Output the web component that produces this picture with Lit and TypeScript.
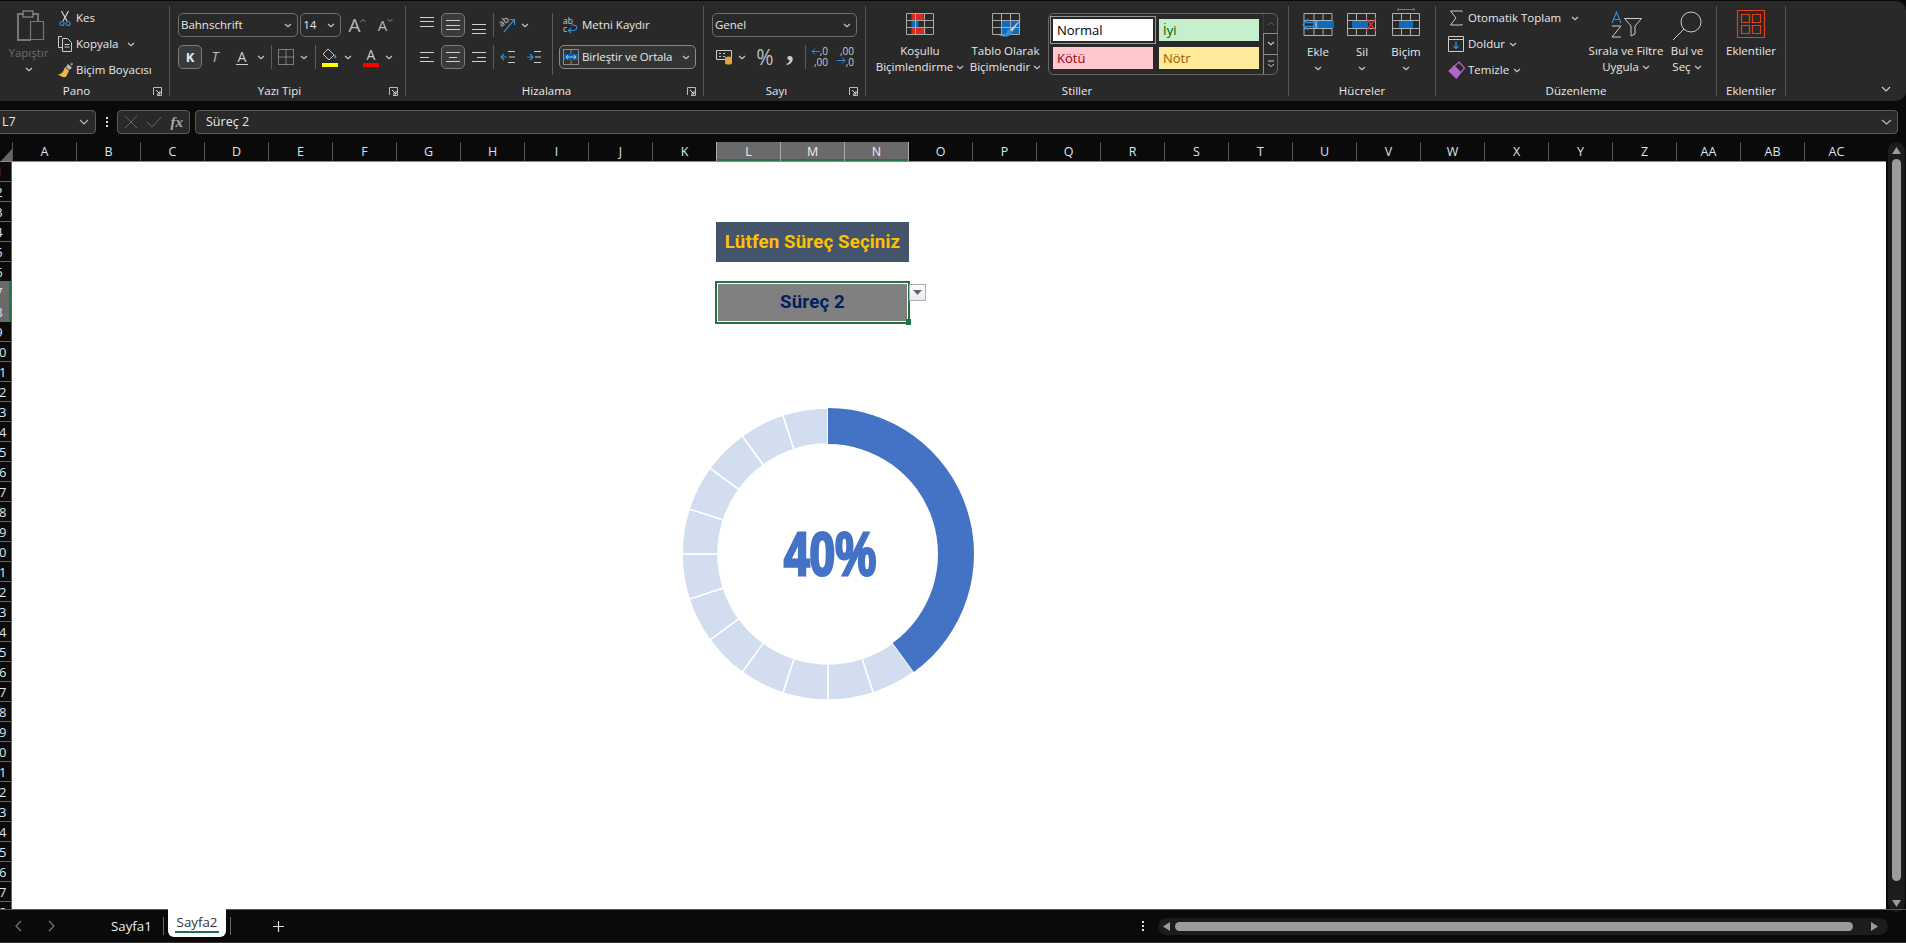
import { LitElement, html, svg, css } from "lit";
import { customElement } from "lit/decorators.js";
import { classMap } from "lit/directives/class-map.js";

const INK = "#c9c9c9";
const BLUE = "#2f8fd8";

const chev = html`<svg class="chev" width="8" height="5" viewBox="0 0 8 5"><path d="M1 1l3 2.600L7 1" fill="none" stroke="${INK}" stroke-width="1.200"/></svg>`;
const launcher = html`<svg width="9" height="9" viewBox="0 0 9 9" fill="none" stroke="#bbb"><path d="M.5 8V.5H8.500V8.500H4"/><path d="M3 3l4 4M4 7h3V4" stroke="#ddd"/></svg>`;

const ico = {
  paste: html`<svg width="28" height="32" viewBox="0 0 28 32" fill="none" stroke="#777" stroke-width="2"><path d="M7 4H1v26h13"/><path d="M15 4h6v7"/><path d="M6 1h10v6H6z" stroke-width="1.400"/><path d="M13.500 11.500h13v18h-13z" stroke-width="1.200"/></svg>`,
  cut: html`<svg width="12" height="17" viewBox="0 0 12 17" fill="none"><path d="M2.500 1l5.500 10M9.500 1L4 11" stroke="#ddd" stroke-width="1.100"/><circle cx="3" cy="13.500" r="2" stroke="${BLUE}" stroke-width="1.200"/><circle cx="9" cy="13.500" r="2" stroke="${BLUE}" stroke-width="1.200"/></svg>`,
  copy: html`<svg width="16" height="16" viewBox="0 0 16 16" fill="none" stroke="#ccc"><path d="M5 .5H1.500v11H5"/><path d="M5.500 2.500h5l4 4v9h-9z"/><path d="M7.500 8.500h5M7.500 11h5"/></svg>`,
  painter: html`<svg width="17" height="16" viewBox="0 0 17 16"><path d="M8 5l4 4-3 6c-3 .5-6-.5-8-3 3 .5 5-1 7-7z" fill="#e8b64c"/><path d="M9 5l2-3 4 4-3 2z" fill="#bbb"/><path d="M13 2l2-1.500 1.200 1.500-1.700 2z" fill="#888"/></svg>`,
  lines: (a: number, b: number, c: number, x1 = [2, 2, 2], x2 = [16, 16, 16]) => html`<svg width="18" height="24" viewBox="0 0 18 24" stroke="#d0d0d0"><path d="M${x1[0]} ${a}.5H${x2[0]}M${x1[1]} ${b}.5H${x2[1]}M${x1[2]} ${c}.5H${x2[2]}" fill="none"/></svg>`,
  orient: html`<svg width="18" height="18" viewBox="0 0 18 18" fill="none"><text x="1" y="9" transform="rotate(-40 5 8)" font-size="9" font-family="Open Sans" fill="#ccc">ab</text><path d="M5 16L15 4M10.500 3.500h5V9" stroke="${BLUE}" stroke-width="1.200"/></svg>`,
  outdent: html`<svg width="16" height="14" viewBox="0 0 16 14" fill="none"><path d="M8 1.500h7M8 12.500h7M9 7h6" stroke="#ccc"/><path d="M7 7H1M4 4L1 7l3 3" stroke="${BLUE}" stroke-width="1.200"/></svg>`,
  indent: html`<svg width="16" height="14" viewBox="0 0 16 14" fill="none"><path d="M8 1.500h7M8 12.500h7M9 7h6" stroke="#ccc"/><path d="M1 7h6M4 4l3 3-3 3" stroke="${BLUE}" stroke-width="1.200"/></svg>`,
  wrap: html`<svg width="16" height="16" viewBox="0 0 16 16" fill="none"><text x="1" y="7" font-size="8.500" font-family="Open Sans" fill="#ccc">ab</text><text x="1" y="15" font-size="8.500" font-family="Open Sans" fill="#ccc">c</text><path d="M7 13.500h4c5 0 5-5.500 0-5.500H9M9 11l-2.500 2.500L9 16" stroke="${BLUE}" stroke-width="1.100"/></svg>`,
  merge: html`<svg width="16" height="16" viewBox="0 0 16 16" fill="none"><rect x=".5" y=".5" width="15" height="15" stroke="#8a8a8a"/><rect x="1" y="5" width="14" height="6" fill="#0f5ea8"/><path d="M3 8h10M5 6l-2 2 2 2M11 6l2 2-2 2" stroke="#8fd0ff"/><path d="M8 .5v4M8 11.500v4" stroke="#8a8a8a"/></svg>`,
  acc: html`<svg width="17" height="16" viewBox="0 0 17 16" fill="none"><path d="M.5 1.500h15v9h-15z" stroke="#ccc"/><path d="M3 4.500h2M3 7.500h2M7 4.500h2M7 7.500h2" stroke="#ccc"/><ellipse cx="12.500" cy="9" rx="3.500" ry="1.500" fill="#e8a33d"/><path d="M9 9v5c0 2 7 2 7 0V9" fill="#e8a33d"/></svg>`,
  cond: html`<svg width="28" height="22" viewBox="0 0 28 22" fill="none"><path d="M5.500 .5h12v7h-12z" fill="#d92b20"/><path d="M5.500 7.500h7v7h-7z" fill="#0f6cbd"/><path d="M5.500 14.500h14v7h-14z" fill="#d92b20"/><path d="M.5.5h27v21H.5zM.5 7.500h27M.5 14.500h27M9.500.5v21M18.500.5v21" stroke="#a8a8a8"/></svg>`,
  table: html`<svg style="margin-left:2px" width="30" height="25" viewBox="0 0 30 25" fill="none"><path d="M9.500 7.500h18v14h-18z" fill="#0f6cbd"/><path d="M.5.5h27v21H.5zM.5 7.500h27M.5 14.500h27M9.500.5v21M18.500.5v21" stroke="#a8a8a8"/><path d="M29 6L18 17l2 2z" fill="#ccc"/><path d="M17 16c-2 1-2 4-4 5-2 1-5 1-6 1 3 2 9 3 12-1 1-2 1-3 1-3z" fill="#3a8fd0"/></svg>`,
  ekle: html`<svg width="32" height="23" viewBox="0 0 32 23" fill="none"><path d="M2 .5h28v22H2zM2 7.500h28M2 15.500h28M12 .5v22M21 .5v22" stroke="#b0b0b0"/><path d="M12 8h20v7H12z" fill="#0f6cbd"/><path d="M14 8v7" stroke="#fff"/><path d="M16 9.500H4M16 13.500H4M6 6l-5 5.500 5 5.500" stroke="${BLUE}" stroke-width="1.400"/></svg>`,
  sil: html`<svg width="30" height="23" viewBox="0 0 30 23" fill="none"><path d="M.5.5h28v22H.5zM.5 7.500h28M.5 15.500h28M9.500.5v22M19.500.5v22" stroke="#b0b0b0"/><path d="M5 8h16v7H5z" fill="#0f6cbd"/><path d="M19 5l10 13M29 5L19 18" stroke="#d13438" stroke-width="1.400"/></svg>`,
  bicim: html`<svg width="28" height="28" viewBox="0 0 28 28" fill="none"><path d="M6 1.500h16M6 0v3M22 0v3" stroke="${BLUE}"/><path d="M.5 5.500h27v22H.5zM.5 12.500h27M.5 20.500h27M9.500 5.500v22M18.500 5.500v22" stroke="#b0b0b0"/><path d="M7 13h14v7H7z" fill="#0f6cbd"/></svg>`,
  sigma: html`<svg width="14" height="16" viewBox="0 0 14 16" fill="none"><path d="M13 2V1H1.500L7 8l-5.500 7H13v-1" stroke="#ccc"/></svg>`,
  fill: html`<svg width="16" height="16" viewBox="0 0 16 16" fill="none"><path d="M.5.5h15v15H.5zM.5 3.500h15" stroke="#ccc"/><path d="M8 5.500v7M5.500 10L8 12.500 10.500 10" stroke="${BLUE}" stroke-width="1.200"/></svg>`,
  clear: html`<svg width="17" height="18" viewBox="0 0 17 18"><path d="M11 1l5.500 6-8 10L1 10z" fill="none" stroke="#b565c9" stroke-width="1.200"/><path d="M1 10l5-6 7 7-4.500 6z" fill="#b565c9"/></svg>`,
  sort: html`<svg width="31" height="27" viewBox="0 0 31 27" fill="none"><path d="M13.500 7.500h17L24 15v8l-4 2v-10z" stroke="#ccc"/><path d="M1 15h9L1 26h9" stroke="#ccc"/><path d="M1 12L5.500 1 10 12M2.500 8.500h6" stroke="${BLUE}" stroke-width="1.200"/></svg>`,
  find: html`<svg width="30" height="30" viewBox="0 0 30 30" fill="none" stroke="#ccc"><circle cx="19" cy="11" r="10"/><path d="M12 18L1 29"/></svg>`,
  addin: html`<svg width="28" height="28" viewBox="0 0 28 28" fill="none" stroke="#e0401a" stroke-width="1.200"><path d="M.5.5h27v27H.5z"/><path d="M4.500 4.500h8v8h-8zM15.500 4.500h8v8h-8zM4.500 15.500h8v8h-8zM15.500 15.500h8v8h-8z"/></svg>`,
  borders: html`<svg width="16" height="16" viewBox="0 0 16 16" fill="none" stroke="#ccc" stroke-dasharray="1 1"><path d="M.5.5h15v15H.5zM.5 8h15M8 .5v15"/></svg>`,
  bucket: html`<svg width="16" height="14" viewBox="0 0 16 14" fill="none"><path d="M6 1l6 6-5 5-6-6z" stroke="#ccc"/><path d="M13 6c1 2 2 3 1 4s-2 0-2-1z" fill="${BLUE}"/></svg>`,
};

const COLS = "A B C D E F G H I J K L M N O P Q R S T U V W X Y Z AA AB AC".split(" ");
const ROWS = Array.from({ length: 38 }, (_, i) => i + 1);

// one light wedge for every 5%, the first 40% is a single solid arc
function wedge(from: number, to: number, ro = 146, ri = 110): string {
  const p = (r: number, a: number) => {
    const t = (a * Math.PI) / 180;
    return `${(r * Math.sin(t)).toFixed(2)} ${(-r * Math.cos(t)).toFixed(2)}`;
  };
  return `M${p(ro, from)}A${ro} ${ro} 0 0 1 ${p(ro, to)}L${p(ri, to)}A${ri} ${ri} 0 0 0 ${p(ri, from)}Z`;
}
const WEDGES = Array.from({ length: 12 }, (_, i) => wedge(144 + i * 18, 162 + i * 18));

@customElement("app-root")
export class AppRoot extends LitElement {
  static override styles = css`
    :host {
      display: block;
      width: 1906px;
      height: 943px;
      overflow: hidden;
      background: #0a0a0a;
      color: #e8e8e8;
      font: 11.5px/16px "Open Sans", "Noto Sans", sans-serif;
    }
    svg { display: block; flex: none; overflow: visible; }
    .ribbon {
      display: flex;
      height: 100px;
      margin-top: 1px;
      background: #292929;
      border-radius: 0 10px 10px 0;
    }
    .group { display: flex; flex-direction: column; flex: none; }
    .g-pano { width: 169px; }
    .g-font { width: 235px; }
    .g-align { width: 297px; }
    .g-num { width: 161px; }
    .g-style { width: 422px; }
    .g-cell { width: 146px; }
    .g-edit { width: 280px; }
    .g-addin { width: 68px; }
    .sep { flex: none; width: 1px; margin: 5px 0; background: #555; }
    .body { flex: 1; min-height: 0; }
    .foot { display: flex; align-items: center; height: 20px; flex: none; }
    .foot b { flex: 1; text-align: center; font-weight: 400; }
    .foot span { flex: none; width: 16px; }
    .collapse { flex: 1; display: flex; justify-content: flex-end; padding: 85px 15px 0 0; }

    .small { display: flex; align-items: center; gap: 3px; height: 26px; white-space: nowrap; }
    .small .i { width: 16px; display: flex; justify-content: center; flex: none; }
    .pano { display: flex; padding-top: 4px; }
    .paste { width: 57px; flex: none; display: flex; flex-direction: column; align-items: center; padding-top: 5px; color: #6b6b6b; }
    .paste svg:first-child { margin-left: 5px; }
    .paste span { margin-top: 3px; }
    .paste .chev { margin-top: 6px; }

    .combo {
      box-sizing: border-box;
      display: flex;
      align-items: center;
      justify-content: space-between;
      height: 24px;
      padding: 0 5px 0 2px;
      border: 1px solid #6e6e6e;
      border-radius: 5px;
      white-space: nowrap;
    }
    .cell { display: flex; align-items: center; justify-content: center; height: 24px; }
    .vsep { width: 1px; height: 24px; background: #5c5c5c; justify-self: center; }
    .on { box-sizing: border-box; border: 1px solid #7c7c7c; border-radius: 5px; background: #3a3a3a; }
    .font { padding: 12px 0 0 8px; }
    .font-1 { display: flex; align-items: center; gap: 2px; }
    .font-2 { display: grid; grid-template-columns: 24px 26px 28px 10px 10px 19px 18px 4px 26px 10px 5px 26px 10px; margin-top: 8px; }
    .w123 { width: 123px; } .w42 { width: 42px; } .w145 { width: 145px; }
    .grow { display: flex; align-items: flex-start; font-size: 19px; line-height: 24px; margin-left: 5px; width: 28px; color: #b8b8b8; }
    .grow svg { margin-top: 5px; }
    .grow.b { font-size: 15px; margin-left: 0; }
    .colorbar { display: flex; flex-direction: column; align-items: center; width: 16px; }
    .colorbar i { display: block; width: 16px; height: 4px; margin-top: 1px; }
    .letter { font-size: 14px; line-height: 15px; color: #ccc; }
    .kb { font-weight: 700; font-size: 13px; }
    .ti { font-style: italic; font-size: 14px; color: #bbb; }
    .u { border-bottom: 1px solid #ccc; line-height: 14px; padding: 0 2px; font-size: 14px; color: #ccc; }

    .align { display: flex; padding: 12px 0 0 9px; }
    .align-grid { display: grid; grid-template-columns: 24px 2px 24px 2px 24px 4px 26px 26px; grid-auto-rows: 24px; row-gap: 8px; }
    .wide-sep { width: 1px; height: 62px; margin: 0 6px 0 5px; background: #5c5c5c; }
    .merge-col { display: flex; flex-direction: column; gap: 8px; }
    .wrap { display: flex; align-items: center; gap: 4px; height: 24px; padding-left: 3px; white-space: nowrap; }
    .merge { box-sizing: border-box; width: 137px; height: 24px; display: flex; align-items: center; gap: 3px; padding: 0 5px 0 3px; border: 1px solid #8a8a8a; border-radius: 5px; white-space: nowrap; background: #333; letter-spacing: -.15px; }
    .merge .chev { margin-left: auto; }

    .num { padding: 12px 0 0 8px; }
    .num-2 { display: grid; grid-template-columns: 25px 10px 6px 24px 26px 4px 26px 26px; margin-top: 8px; }
    .pct { font-size: 21px; color: #bbb; }
    .comma { font: 700 30px/24px "Liberation Serif", serif; color: #ccc; padding-bottom: 14px; box-sizing: border-box; }
    .dec { position: relative; font-size: 10px; line-height: 11px; text-align: right; width: 16px; color: #ccc; }
    .dec svg { position: absolute; left: -1px; top: 2px; }
    .dec.low svg { top: 11px; }

    .styles { display: flex; padding-top: 12px; padding-left: 8px; }
    .big { display: flex; flex-direction: column; align-items: center; flex: none; text-align: center; white-space: nowrap; }
    .big .ic { height: 27px; display: flex; align-items: flex-start; margin-bottom: 3px; }
    .big p { margin: 0; display: flex; align-items: center; gap: 3px; height: 16px; }
    .w92 { width: 92px; } .w79 { width: 79px; } .w44 { width: 44px; } .w78 { width: 78px; }
    .gallery { box-sizing: border-box; display: flex; width: 230px; height: 62px; margin-left: 3px; border: 1px solid #666; border-radius: 6px; }
    .swatches { display: grid; grid-template-columns: 100px 100px; grid-auto-rows: 22px; gap: 6px; padding: 5px 4px; }
    .swatch { padding-left: 4px; font-size: 13px; line-height: 22px; }
    .s-n { background: #fff; color: #000; outline: 1px solid #999; outline-offset: 2px; }
    .s-g { background: #c6efce; color: #006100; }
    .s-b { background: #ffc7ce; color: #9c0006; }
    .s-m { background: #ffeb9c; color: #9c5700; }
    .spin { display: flex; flex-direction: column; width: 15px; margin-left: auto; margin-right: -1px; }
    .spin div { flex: 1; display: flex; align-items: center; justify-content: center; border: 1px solid #8a8a8a; border-width: 1px 0 0 1px; }
    .spin div:first-child { border-top: 0; border-left: 1px solid #555; opacity: .45; }
    .spin div:last-child { border-radius: 0 0 6px 0; }

    .cells { display: flex; padding: 8px 0 0 7px; }
    .cells .big .ic { height: 27px; align-items: flex-end; margin-bottom: 8px; }
    .edit { display: flex; padding: 4px 0 0 12px; }
    .edit .rows { width: 139px; flex: none; }
    .edit .small { gap: 4px; }
    .edit .big .ic { height: 31px; margin-bottom: 1px; margin-top: 5px; }
    .edit .big { margin-top: 1px; }
    .addin { padding: 8px 0 0; }
    .addin.big .ic { height: 32px; margin: 1px 0; }

    .fbar { display: flex; align-items: center; height: 24px; margin-top: 9px; font-size: 12.5px; }
    .namebox, .fxbox, .finput { box-sizing: border-box; height: 24px; display: flex; align-items: center; border: 1px solid #5a5a5a; border-radius: 4px; background: #292929; }
    .namebox { width: 100px; margin-left: -4px; padding: 0 6px 0 5px; justify-content: space-between; flex: none; }
    .dots { flex: none; width: 21px; display: flex; flex-direction: column; align-items: center; gap: 2px; }
    .dots i { display: block; width: 2px; height: 2px; background: #ddd; }
    .fxbox { width: 73px; flex: none; justify-content: space-around; padding: 0 2px; }
    .fx { font: italic 700 15px/16px "Liberation Serif", serif; color: #aaa; }
    .finput { width: 1703px; margin-left: 5px; padding: 0 5px 0 10px; justify-content: space-between; flex: none; }

    .main { display: flex; height: 767px; margin-top: 8px; }
    .left { width: 1886px; flex: none; }
    .cols { display: flex; height: 19px; border-bottom: 1px solid #8a8a8a; box-sizing: content-box; }
    .corner { width: 12px; flex: none; display: flex; align-items: flex-end; justify-content: flex-end; }
    .col { box-sizing: border-box; width: 64px; flex: none; border-left: 1px solid #555; text-align: center; line-height: 20px; font-size: 12.5px; color: #dbe6f2; }
    .col.sel { background: #6a6a6a; border-left-color: #aaa; box-shadow: inset 0 -2px 0 #217346; color: #eee; }
    .col.sel + .col:not(.sel) { border-left-color: #aaa; }
    .under { display: flex; height: 747px; }
    .rowh { width: 11px; flex: none; overflow: hidden; border-right: 1px solid #666; }
    .rh { box-sizing: border-box; display: flex; height: 20px; border-bottom: 1px solid #666; line-height: 20px; font-size: 13px; color: #dbe6f2; }
    .rh span { flex: none; width: 26px; margin-left: -14px; text-align: center; }
    .rh.sel { background: #6a6a6a; box-shadow: inset -2px 0 0 #217346; }
    .sheet {
      position: relative;
      flex: 1;
      overflow: hidden;
      background: #fff;
      display: grid;
      grid-template-columns: repeat(29, 64px);
      grid-template-rows: repeat(38, 20px);
    }
    .title, .pick { display: flex; align-items: center; justify-content: center; font: 700 18.67px/1 Roboto, "Liberation Sans", sans-serif; letter-spacing: .15px; grid-column: 12 / span 3; }
    .title { grid-row: 4 / span 2; margin-right: -1px; background: #44546a; color: #ffc000; }
    .pick {
      grid-row: 7 / span 2;
      position: relative;
      margin: -1px -2px -2px -1px;
      border: 2px solid #217346;
      background: #808080;
      color: #002060;
      box-shadow: inset 0 0 0 1px #fff;
    }
    .handle { position: absolute; right: -3px; bottom: -3px; width: 5px; height: 6px; background: #217346; }
    .drop { box-sizing: border-box; position: absolute; left: 192px; top: 1px; width: 17px; height: 17px; display: flex; align-items: center; justify-content: center; border: 1px solid #aab; background: linear-gradient(#fff, #e8e8f0); }
    .chart { position: absolute; left: 666px; top: 242px; }
    .chart text { font: 700 61px "Liberation Sans", sans-serif; fill: #4472c4; stroke: #4472c4; stroke-width: 3px; }
    .vscroll { position: relative; flex: none; width: 17px; height: 770px; margin-left: 2px; border-radius: 9px; background: #1c1c1c; display: flex; flex-direction: column; align-items: center; padding-top: 5px; box-sizing: border-box; }
    .vthumb { width: 9px; height: 722px; margin-top: 5px; border-radius: 5px; background: #9b9b9b; }
    .vscroll svg:last-child { margin-top: 19px; }

    .tabs { display: flex; align-items: center; height: 32px; border-top: 1px solid #555; border-bottom: 1px solid #333; position: relative; }
    .nav { flex: none; width: 33px; display: flex; justify-content: center; }
    .nav.first { margin-left: 2px; }
    .t1 { flex: none; margin-left: 43px; width: 52px; font-size: 13.3px; line-height: 20px; color: #eee; }
    .tsep { flex: none; width: 1px; height: 18px; background: #666; }
    .t2 {
      box-sizing: border-box;
      flex: none;
      align-self: flex-start;
      width: 58px;
      height: 28px;
      margin: -1px 4px 0 4px;
      padding: 4px 7px 0;
      background: #fff;
      border-radius: 0 0 6px 6px;
      color: #333;
      font-size: 13.3px;
      line-height: 18px;
      text-align: center;
    }
    .t2 span { display: block; border-bottom: 2px solid #217346; }
    .plus { flex: none; margin-left: 41px; }
    .tdots { margin-left: 856px; flex: none; width: 3px; }
    .hscroll { flex: none; margin-left: 14px; width: 730px; height: 17px; border-radius: 9px; background: #1c1c1c; display: flex; align-items: center; padding: 0 5px; box-sizing: border-box; }
    .hthumb { flex: none; width: 678px; height: 9px; margin: 0 18px 0 5px; border-radius: 5px; background: #9b9b9b; }
  `;

  private group(cls: string, label: string, launch: boolean, body: unknown) {
    return html`
      <div class="group ${cls}">
        <div class="body">${body}</div>
        <div class="foot"><b>${label}</b>${launch ? html`<span>${launcher}</span>` : ""}</div>
      </div>
      <i class="sep"></i>
    `;
  }

  private renderRibbon() {
    return html`
      <div class="ribbon">
        ${this.group("g-pano", "Pano", true, html`
          <div class="pano">
            <div class="paste">${ico.paste}<span>Yapıştır</span>${chev}</div>
            <div>
              <div class="small"><span class="i">${ico.cut}</span>Kes</div>
              <div class="small"><span class="i">${ico.copy}</span>Kopyala &nbsp;${chev}</div>
              <div class="small"><span class="i">${ico.painter}</span>Biçim Boyacısı</div>
            </div>
          </div>
        `)}
        ${this.group("g-font", "Yazı Tipi", true, html`
          <div class="font">
            <div class="font-1">
              <div class="combo w123">Bahnschrift ${chev}</div>
              <div class="combo w42">14 ${chev}</div>
              <div class="grow">A<svg width="6" height="5" viewBox="0 0 6 5"><path d="M.5 4L3 1.500 5.500 4" fill="none" stroke="#4aa3e0"/></svg></div>
              <div class="grow b">A<svg width="6" height="5" viewBox="0 0 6 5"><path d="M.5 1L3 3.500 5.500 1" fill="none" stroke="#4aa3e0"/></svg></div>
            </div>
            <div class="font-2">
              <div class="cell on kb">K</div>
              <div class="cell ti">T</div>
              <div class="cell"><span class="u">A</span></div>
              <div class="cell">${chev}</div>
              <div class="vsep"></div>
              <div class="cell">${ico.borders}</div>
              <div class="cell">${chev}</div>
              <div class="vsep"></div>
              <div class="cell"><div class="colorbar">${ico.bucket}<i style="background:#ffff00"></i></div></div>
              <div class="cell">${chev}</div>
              <div></div>
              <div class="cell"><div class="colorbar"><span class="letter">A</span><i style="background:#ff0000"></i></div></div>
              <div class="cell">${chev}</div>
            </div>
          </div>
        `)}
        ${this.group("g-align", "Hizalama", true, html`
          <div class="align">
            <div class="align-grid">
              <div class="cell">${ico.lines(4, 8, 13)}</div><div></div>
              <div class="cell on">${ico.lines(7, 12, 16)}</div><div></div>
              <div class="cell">${ico.lines(11, 16, 20)}</div>
              <div class="vsep"></div>
              <div class="cell">${ico.orient}</div>
              <div class="cell" style="justify-content:flex-start">${chev}</div>
              <div class="cell">${ico.lines(7, 12, 16, [2, 2, 2], [16, 11, 16])}</div><div></div>
              <div class="cell on">${ico.lines(7, 12, 16, [2, 5, 2], [16, 13, 16])}</div><div></div>
              <div class="cell">${ico.lines(7, 12, 16, [2, 7, 2], [16, 16, 16])}</div>
              <div class="vsep"></div>
              <div class="cell">${ico.outdent}</div>
              <div class="cell">${ico.indent}</div>
            </div>
            <div class="wide-sep"></div>
            <div class="merge-col">
              <div class="wrap">${ico.wrap}Metni Kaydır</div>
              <div class="merge">${ico.merge}Birleştir ve Ortala ${chev}</div>
            </div>
          </div>
        `)}
        ${this.group("g-num", "Sayı", true, html`
          <div class="num">
            <div class="combo w145">Genel ${chev}</div>
            <div class="num-2">
              <div class="cell">${ico.acc}</div>
              <div class="cell">${chev}</div>
              <div></div>
              <div class="cell pct">%</div>
              <div class="cell comma">,</div>
              <div class="vsep"></div>
              <div class="cell"><div class="dec">,0<br />,00<svg width="9" height="7" viewBox="0 0 9 7" fill="none"><path d="M9 3.500H1M4 .5l-3 3 3 3" stroke="${BLUE}"/></svg></div></div>
              <div class="cell"><div class="dec low">,00<br />,0<svg width="9" height="7" viewBox="0 0 9 7" fill="none"><path d="M0 3.500h8M5 .5l3 3-3 3" stroke="${BLUE}"/></svg></div></div>
            </div>
          </div>
        `)}
        ${this.group("g-style", "Stiller", false, html`
          <div class="styles">
            <div class="big w92"><div class="ic">${ico.cond}</div><p>Koşullu</p><p>Biçimlendirme ${chev}</p></div>
            <div class="big w79"><div class="ic">${ico.table}</div><p>Tablo Olarak</p><p>Biçimlendir ${chev}</p></div>
            <div class="gallery">
              <div class="swatches">
                <div class="swatch s-n">Normal</div>
                <div class="swatch s-g">İyi</div>
                <div class="swatch s-b">Kötü</div>
                <div class="swatch s-m">Nötr</div>
              </div>
              <div class="spin">
                <div><svg width="8" height="5" viewBox="0 0 8 5"><path d="M1 4l3-2.600L7 4" fill="none" stroke="#aaa"/></svg></div>
                <div>${chev}</div>
                <div><svg width="8" height="8" viewBox="0 0 8 8" fill="none" stroke="#ccc"><path d="M1 1h6M1 4l3 2.600L7 4"/></svg></div>
              </div>
            </div>
          </div>
        `)}
        ${this.group("g-cell", "Hücreler", false, html`
          <div class="cells">
            <div class="big w44"><div class="ic">${ico.ekle}</div><p>Ekle</p><p>${chev}</p></div>
            <div class="big w44"><div class="ic">${ico.sil}</div><p>Sil</p><p>${chev}</p></div>
            <div class="big w44"><div class="ic">${ico.bicim}</div><p>Biçim</p><p>${chev}</p></div>
          </div>
        `)}
        ${this.group("g-edit", "Düzenleme", false, html`
          <div class="edit">
            <div class="rows">
              <div class="small"><span class="i">${ico.sigma}</span>Otomatik Toplam &nbsp;${chev}</div>
              <div class="small"><span class="i">${ico.fill}</span>Doldur ${chev}</div>
              <div class="small"><span class="i">${ico.clear}</span>Temizle ${chev}</div>
            </div>
            <div class="big w78"><div class="ic">${ico.sort}</div><p>Sırala ve Filtre</p><p>Uygula ${chev}</p></div>
            <div class="big w44"><div class="ic">${ico.find}</div><p>Bul ve</p><p>Seç ${chev}</p></div>
          </div>
        `)}
        ${this.group("g-addin", "Eklentiler", false, html`
          <div class="addin big"><div class="ic">${ico.addin}</div><p>Eklentiler</p></div>
        `)}
        <div class="collapse">
          <svg width="10" height="6" viewBox="0 0 10 6"><path d="M1 1l4 4 4-4" fill="none" stroke="#ccc" stroke-width="1.200"/></svg>
        </div>
      </div>
    `;
  }

  private renderFormulaBar() {
    return html`
      <div class="fbar">
        <div class="namebox">L7 <svg width="10" height="6" viewBox="0 0 10 6"><path d="M1 1l4 4 4-4" fill="none" stroke="#bbb" stroke-width="1.200"/></svg></div>
        <div class="dots"><i></i><i></i><i></i></div>
        <div class="fxbox">
          <svg width="14" height="14" viewBox="0 0 14 14" fill="none" stroke="#666"><path d="M1 1l12 12M13 1L1 13"/></svg>
          <svg width="16" height="12" viewBox="0 0 16 12" fill="none" stroke="#666"><path d="M1 6l5 5L15 1"/></svg>
          <span class="fx">fx</span>
        </div>
        <div class="finput">Süreç 2 <svg width="11" height="6" viewBox="0 0 11 6"><path d="M1 1l4.500 4L10 1" fill="none" stroke="#bbb" stroke-width="1.200"/></svg></div>
      </div>
    `;
  }

  private renderSheet() {
    return html`
      <div class="sheet">
        <div class="title">Lütfen Süreç Seçiniz</div>
        <div class="pick">
          Süreç 2
          <span class="handle"></span>
          <span class="drop"><svg width="9" height="5" viewBox="0 0 9 5"><path d="M0 0h9L4.500 5z" fill="#666"/></svg></span>
        </div>
        <svg class="chart" width="300" height="300" viewBox="-150 -150 300 300">
          ${WEDGES.map((d) => svg`<path d="${d}" fill="#d2deef" stroke="#fff" stroke-width="1.500"/>`)}
          <path d="${wedge(0, 144)}" fill="#4472c4"/>
          <text x="2" y="21" text-anchor="middle" textLength="92" lengthAdjust="spacingAndGlyphs">40%</text>
        </svg>
      </div>
    `;
  }

  override render() {
    return html`
      ${this.renderRibbon()}
      ${this.renderFormulaBar()}
      <div class="main">
        <div class="left">
          <div class="cols">
            <div class="corner"><svg width="12" height="13" viewBox="0 0 12 13"><path d="M12 1v12H1z" fill="#666"/></svg></div>
            ${COLS.map((c) => html`<div class=${classMap({ col: true, sel: c === "L" || c === "M" || c === "N" })}>${c}</div>`)}
          </div>
          <div class="under">
            <div class="rowh">
              ${ROWS.map((r) => html`<div class=${classMap({ rh: true, sel: r === 7 || r === 8 })}><span>${r}</span></div>`)}
            </div>
            ${this.renderSheet()}
          </div>
        </div>
        <div class="vscroll">
          <svg width="9" height="7" viewBox="0 0 9 7"><path d="M4.500 0L9 7H0z" fill="#9b9b9b"/></svg>
          <div class="vthumb"></div>
          <svg width="9" height="7" viewBox="0 0 9 7"><path d="M0 0h9L4.500 7z" fill="#9b9b9b"/></svg>
        </div>
      </div>
      <div class="tabs">
        <div class="nav first"><svg width="7" height="12" viewBox="0 0 7 12"><path d="M6 1L1 6l5 5" fill="none" stroke="#777" stroke-width="1.200"/></svg></div>
        <div class="nav"><svg width="7" height="12" viewBox="0 0 7 12"><path d="M1 1l5 5-5 5" fill="none" stroke="#777" stroke-width="1.200"/></svg></div>
        <div class="t1">Sayfa1</div>
        <i class="tsep"></i>
        <div class="t2"><span>Sayfa2</span></div>
        <i class="tsep"></i>
        <svg class="plus" width="13" height="13" viewBox="0 0 13 13"><path d="M6.500 1v11M1 6.500h11" stroke="#ddd" stroke-width="1.200"/></svg>
        <div class="tdots dots"><i></i><i></i><i></i></div>
        <div class="hscroll">
          <svg width="7" height="9" viewBox="0 0 7 9"><path d="M7 0v9L0 4.500z" fill="#9b9b9b"/></svg>
          <div class="hthumb"></div>
          <svg width="7" height="9" viewBox="0 0 7 9"><path d="M0 0v9l7-4.500z" fill="#9b9b9b"/></svg>
        </div>
      </div>
    `;
  }
}

declare global {
  interface HTMLElementTagNameMap {
    "app-root": AppRoot;
  }
}
